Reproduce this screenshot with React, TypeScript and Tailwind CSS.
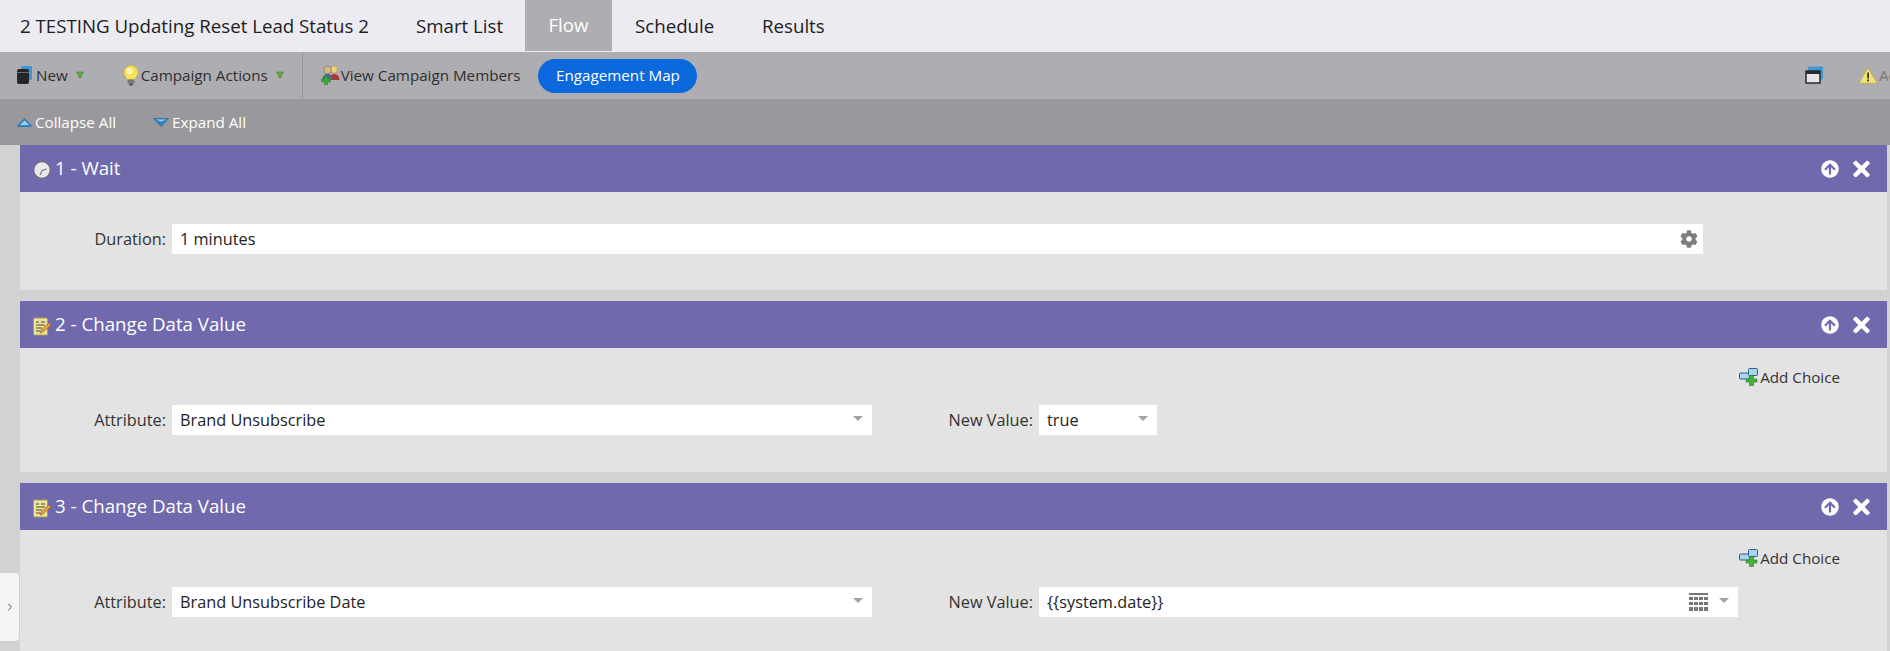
import { ReactNode } from "react";
import { ChevronRight } from "lucide-react";
import { FaArrowCircleUp, FaCog, FaTimes } from "react-icons/fa";

const GreenCaret = () => (
  <svg width="8" height="8" viewBox="0 0 8 8" className="block">
    <path d="M0.500 1h7L4 7.500z" fill="#5aa83c" stroke="#3f7f2c" strokeWidth="0.5" />
  </svg>
);

const GrayCaret = () => (
  <svg width="10" height="5" viewBox="0 0 10 5" className="block mb-[3px]">
    <path d="M0 0h10L5 5z" fill="#a2a2a2" />
  </svg>
);

const NewIcon = () => (
  <svg width="16" height="20" viewBox="0 0 16 20">
    <rect x="5" y="1" width="11" height="14" rx="1" fill="#3f97d6" />
    <rect x="1" y="4" width="12" height="15" rx="2" fill="#26262a" />
    <rect x="1" y="7" width="12" height="1" fill="#6d6d72" />
  </svg>
);

const BulbIcon = () => (
  <svg width="16" height="21" viewBox="0 0 16 21">
    <path d="M8 0.500a7 7 0 0 1 7 7c0 3-2.200 4-3 7H4c-0.800-3-3-4-3-7a7 7 0 0 1 7-7z" fill="#f4e35c" stroke="#c9b23a" strokeWidth="0.6" />
    <circle cx="6.500" cy="6" r="3" fill="#fbf6b4" />
    <rect x="4.500" y="14.500" width="7" height="4" rx="1" fill="#77777b" />
    <rect x="6" y="18.500" width="4" height="2" rx="1" fill="#4e4e52" />
  </svg>
);

const MembersIcon = () => (
  <svg width="20" height="20" viewBox="0 0 20 20">
    <circle cx="14" cy="4.500" r="3.500" fill="#efcf70" stroke="#a98a3a" strokeWidth="0.5" />
    <path d="M10 15c0-4 1-6 4-6s5.500 2 5.500 6z" fill="#a83a3a" />
    <circle cx="7.500" cy="5" r="3.800" fill="#d7b98a" stroke="#6d5a40" strokeWidth="0.5" />
    <path d="M2.500 15c0-4 2-6 5-6s5 2 5 6z" fill="#4c6a8c" />
    <path d="M4.500 11h3v3h3v3h-3v3h-3v-3h-3v-3h3z" fill="#3ea63a" stroke="#2a7f2a" strokeWidth="0.5" />
  </svg>
);

const CollapseIcon = () => (
  <svg width="15" height="9" viewBox="0 0 15 9">
    <path d="M7.500 0.500L14.500 7.500a1 1 0 0 1-0.500 1H1a1 1 0 0 1-0.500-1z" fill="#2f86c4" stroke="#1f5f93" strokeWidth="0.5" />
    <path d="M3 7L7.500 2.500 12 7z" fill="#9ad0f0" />
  </svg>
);

const ExpandIcon = () => (
  <svg width="16" height="9" viewBox="0 0 16 9">
    <path d="M0.500 0.500h15L8 8.500z" fill="#2f86c4" stroke="#1f5f93" strokeWidth="0.5" />
    <path d="M3 1.500h10L8 3.500z" fill="#9ad0f0" />
  </svg>
);

const WindowIcon = () => (
  <svg width="18" height="18" viewBox="0 0 18 18">
    <rect x="3" y="0.500" width="15" height="13" rx="1" fill="#3f97d6" />
    <rect x="1" y="5" width="14" height="12" fill="#e6e6e9" stroke="#2a2a2e" strokeWidth="1.500" />
    <rect x="1" y="5" width="14" height="3" fill="#2a2a2e" />
  </svg>
);

const WarningIcon = () => (
  <svg width="20" height="17" viewBox="0 0 20 17">
    <path d="M10 0.800L19.300 16.300H0.700z" fill="#efe27a" stroke="#b8a94a" strokeWidth="0.8" strokeLinejoin="round" />
    <rect x="9.200" y="5.500" width="1.800" height="6" fill="#3c3a22" />
    <rect x="9.200" y="12.500" width="1.800" height="2" fill="#3c3a22" />
  </svg>
);

const ClockIcon = () => (
  <svg width="18" height="18" viewBox="0 0 18 18">
    <circle cx="9" cy="9" r="8.300" fill="#e9e9ec" stroke="#6e6e76" strokeWidth="1.300" />
    <path d="M9 9.500l4.500-1.500M9 9.500l-2 4.500" stroke="#5a5a62" strokeWidth="1" />
  </svg>
);

const NoteIcon = () => (
  <svg width="18" height="19" viewBox="0 0 18 19">
    <rect x="0.500" y="1" width="14" height="17" rx="1" fill="#ece49a" stroke="#a69c55" />
    <path d="M3 5h3M8 5h4M3 8h9M3 11h6M3 14h4" stroke="#4f4c2c" strokeWidth="1" />
    <path d="M7 16l1-3 8-7 2 2-8 7z" fill="#e5a93a" stroke="#9a4a2c" strokeWidth="0.6" />
  </svg>
);

const ChoiceIcon = () => (
  <svg width="20" height="18" viewBox="0 0 20 18">
    <rect x="0.500" y="5" width="10" height="6" rx="1" fill="#aad4ee" stroke="#2f5f8a" />
    <rect x="9.500" y="0.500" width="9" height="7" rx="1" fill="#aad4ee" stroke="#2f5f8a" />
    <path d="M10.500 7.500h4V11H18v3h-3.500v3.500h-4V14H7v-3h3.500z" fill="#46b03a" stroke="#2a7f2a" strokeWidth="0.6" />
  </svg>
);

const CalendarIcon = () => (
  <svg width="19" height="18" viewBox="0 0 19 18" fill="#777" className="block">
    <rect x="0" y="0" width="19" height="2" />
    <rect x="0" y="4" width="4" height="3" />
    <rect x="5" y="4" width="4" height="3" />
    <rect x="10" y="4" width="4" height="3" />
    <rect x="15" y="4" width="4" height="3" />
    <rect x="0" y="9" width="4" height="3" />
    <rect x="5" y="9" width="4" height="3" />
    <rect x="10" y="9" width="4" height="3" />
    <rect x="15" y="9" width="4" height="3" />
    <rect x="0" y="14" width="4" height="4" />
    <rect x="5" y="14" width="4" height="4" />
    <rect x="10" y="14" width="4" height="4" />
    <rect x="15" y="14" width="4" height="4" />
  </svg>
);

const Panel = ({
  icon,
  title,
  bodyClass,
  children,
}: {
  icon: ReactNode;
  title: string;
  bodyClass: string;
  children: ReactNode;
}) => (
  <section className="flex flex-col">
    <header className="h-[47px] flex items-center bg-[#7069ad] text-white pl-[13px] pr-[17px]">
      <span className="mt-[3px]">{icon}</span>
      <span className="ml-[4px] text-[18.7px]">{title}</span>
      <FaArrowCircleUp className="ml-auto w-[18px] h-[18px]" />
      <FaTimes className="ml-[14px] w-[17px] h-[24px]" />
    </header>
    <div className={`bg-[#e3e3e3] ${bodyClass}`}>{children}</div>
  </section>
);

const Field = ({
  widthClass,
  value,
  children,
}: {
  widthClass: string;
  value: string;
  children?: ReactNode;
}) => (
  <div className={`h-[30px] bg-white flex items-center pl-2 text-[16.3px] text-[#222] ${widthClass}`}>
    <span>{value}</span>
    {children}
  </div>
);

const AddChoice = () => (
  <div className="flex justify-end items-center h-[20px] pr-[47px] text-[15.2px] text-[#333]">
    <ChoiceIcon />
    <span className="ml-px">Add Choice</span>
  </div>
);

export default function App() {
  return (
    <div className="w-[1890px] h-[651px] overflow-hidden flex flex-col bg-[#d2d2d2] font-['Open_Sans',sans-serif] relative">
      <nav className="h-[52px] shrink-0 flex items-stretch bg-[#ebebf1] text-[18.7px] text-[#1d1d1f] whitespace-nowrap">
        <div className="flex items-center pl-[20px] w-[416px]">2 TESTING Updating Reset Lead Status 2</div>
        <div className="flex items-center w-[109px]">Smart List</div>
        <div className="flex items-center justify-center w-[87px] mb-px bg-[#aeadb1] text-white">Flow</div>
        <div className="flex items-center pl-[23px] w-[150px]">Schedule</div>
        <div className="flex items-center">Results</div>
      </nav>

      <div className="h-[47px] shrink-0 flex items-center bg-[#aeadb1] text-[15.2px] text-[#2e2e30] whitespace-nowrap">
        <div className="flex items-center pl-[16px]">
          <NewIcon />
          <span className="ml-[4px]">New</span>
          <span className="ml-[8px]"><GreenCaret /></span>
        </div>
        <div className="flex items-center ml-[39px]">
          <BulbIcon />
          <span className="ml-[2px]">Campaign Actions</span>
          <span className="ml-[8px]"><GreenCaret /></span>
        </div>
        <div className="self-stretch w-px bg-[#98979b] ml-[18px]" />
        <div className="flex items-center ml-[17px]">
          <MembersIcon />
          <span className="ml-px">View Campaign Members</span>
        </div>
        <div className="ml-[18px] h-[34px] w-[159px] flex items-center justify-center rounded-full bg-[#0b69dd] text-white">
          Engagement Map
        </div>
        <div className="ml-auto flex items-center">
          <WindowIcon />
          <span className="ml-[35px]"><WarningIcon /></span>
          <span className="ml-px w-[11px] text-[#77767a]">Ac</span>
        </div>
      </div>

      <div className="h-[46px] shrink-0 flex items-center bg-[#99989c] text-[15.2px] text-white pl-[17px]">
        <CollapseIcon />
        <span className="ml-[3px]">Collapse All</span>
        <span className="ml-[37px]"><ExpandIcon /></span>
        <span className="ml-[3px]">Expand All</span>
      </div>

      <main className="flex-1 min-h-0 flex flex-col gap-[11px] pl-[20px] pr-[3px]">
        <Panel icon={<ClockIcon />} title="1 - Wait" bodyClass="h-[98px] pt-[32px]">
          <div className="flex items-center text-[16.3px] text-[#333]">
            <label className="w-[146px] text-right mr-[6px]">Duration:</label>
            <Field widthClass="w-[1531px] pr-[5px]" value="1 minutes">
              <FaCog className="ml-auto text-[18px] text-[#7d7d7d]" />
            </Field>
          </div>
        </Panel>

        <Panel icon={<NoteIcon />} title="2 - Change Data Value" bodyClass="h-[124px] pt-[19px]">
          <AddChoice />
          <div className="flex items-center text-[16.3px] text-[#333] mt-[18px]">
            <label className="w-[146px] text-right mr-[6px]">Attribute:</label>
            <Field widthClass="w-[700px] pr-[9px]" value="Brand Unsubscribe">
              <span className="ml-auto"><GrayCaret /></span>
            </Field>
            <label className="w-[161px] text-right mr-[6px]">New Value:</label>
            <Field widthClass="w-[118px] pr-[9px]" value="true">
              <span className="ml-auto"><GrayCaret /></span>
            </Field>
          </div>
        </Panel>

        <Panel icon={<NoteIcon />} title="3 - Change Data Value" bodyClass="h-[121px] pt-[18px]">
          <AddChoice />
          <div className="flex items-center text-[16.3px] text-[#333] mt-[19px]">
            <label className="w-[146px] text-right mr-[6px]">Attribute:</label>
            <Field widthClass="w-[700px] pr-[9px]" value="Brand Unsubscribe Date">
              <span className="ml-auto"><GrayCaret /></span>
            </Field>
            <label className="w-[161px] text-right mr-[6px]">New Value:</label>
            <Field widthClass="w-[699px] pr-[9px]" value="{{system.date}}">
              <span className="ml-auto"><CalendarIcon /></span>
              <span className="ml-[11px]"><GrayCaret /></span>
            </Field>
          </div>
        </Panel>
      </main>

      <div className="absolute left-0 top-[573px] h-[68px] w-[19px] flex items-center justify-center rounded-r bg-[#f5f5f5] text-[#555]">
        <ChevronRight size={12} />
      </div>
    </div>
  );
}
